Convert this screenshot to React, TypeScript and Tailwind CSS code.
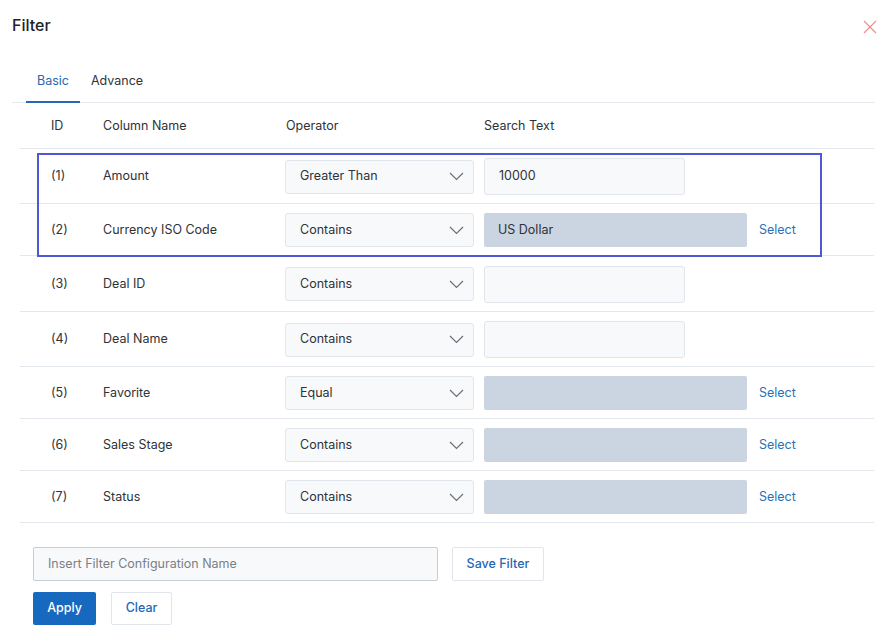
import React from "react";

type Row = {
  id: number;
  name: string;
  op: string;
  kind: "text" | "lookup";
  value?: string;
  h: string;
};

const rows: Row[] = [
  { id: 1, name: "Amount", op: "Greater Than", kind: "text", value: "10000", h: "h-[55px]" },
  { id: 2, name: "Currency ISO Code", op: "Contains", kind: "lookup", value: "US Dollar", h: "h-[52px]" },
  { id: 3, name: "Deal ID", op: "Contains", kind: "text", h: "h-[56px]" },
  { id: 4, name: "Deal Name", op: "Contains", kind: "text", h: "h-[55px]" },
  { id: 5, name: "Favorite", op: "Equal", kind: "lookup", h: "h-[52px]" },
  { id: 6, name: "Sales Stage", op: "Contains", kind: "lookup", h: "h-[52px]" },
  { id: 7, name: "Status", op: "Contains", kind: "lookup", h: "h-[52px]" },
];

function Chevron() {
  return (
    <svg width="15" height="9" viewBox="0 0 15 9" fill="none">
      <polyline points="1,1 7.5,7.5 14,1" stroke="#6b6f76" strokeWidth="1.2" />
    </svg>
  );
}

function CloseIcon() {
  return (
    <svg width="14" height="14" viewBox="0 0 14 14" fill="none">
      <line x1="1" y1="1" x2="13" y2="13" stroke="#ef8c8c" strokeWidth="1.1" />
      <line x1="13" y1="1" x2="1" y2="13" stroke="#ef8c8c" strokeWidth="1.1" />
    </svg>
  );
}

function FilterRow({ row }: { row: Row }) {
  const tall = row.kind === "text";
  return (
    <div
      className={`grid grid-cols-[52px_182px_199px_1fr] items-center border-b border-[#e3e7ee] pl-[31px] pt-[1px] ${row.h}`}
    >
      <div>({row.id})</div>
      <div>{row.name}</div>
      <div className="flex h-[34px] w-[189px] items-center justify-between rounded-[3px] border border-[#e1e5ec] bg-[#f8f9fb] pl-[14px] pr-[9px]">
        <span>{row.op}</span>
        <Chevron />
      </div>
      <div className="flex items-center gap-[12px]">
        {tall ? (
          <div className="flex h-[37px] w-[201px] items-center rounded-[3px] border border-[#e1e5ec] bg-[#f8f9fb] px-[14px]">
            {row.value ?? ""}
          </div>
        ) : (
          <>
            <div className="flex h-[34px] w-[263px] items-center rounded-[2px] bg-[#cbd5e1] px-[14px]">
              {row.value ?? ""}
            </div>
            <span className="text-[#2d70b7]">Select</span>
          </>
        )}
      </div>
    </div>
  );
}

export default function App() {
  return (
    <div
      className="relative h-[630px] w-[887px] overflow-hidden bg-white text-[12.5px] text-[#2f3237]"
      style={{ fontFamily: "Inter, 'Noto Sans', sans-serif" }}
    >
      <div className="flex h-[49px] items-center pl-[12px] text-[16px] font-medium text-[#1f2226]">
        Filter
      </div>
      <button className="absolute left-[863px] top-[20px]">
        <CloseIcon />
      </button>

      {/* Tabs */}
      <div className="mx-[12px] mt-[12px] flex border-b border-[#e6e9ef] pl-[14px]">
        <div className="-mb-px flex h-[42px] items-center border-b-2 border-[#2468b4] px-[11px] pt-[1px] text-[#2468b4]">
          Basic
        </div>
        <div className="-mb-px flex h-[42px] items-center border-b-2 border-transparent px-[11px] pt-[1px]">
          Advance
        </div>
      </div>

      {/* Criteria table */}
      <div className="relative ml-[20px] mr-[13px]">
        <div className="grid h-[46px] grid-cols-[52px_182px_199px_1fr] items-center border-b border-[#e3e7ee] pl-[31px] pt-[2px]">
          <div>ID</div>
          <div>Column Name</div>
          <div className="pl-[1px]">Operator</div>
          <div>Search Text</div>
        </div>
        {rows.map((r) => (
          <FilterRow key={r.id} row={r} />
        ))}
        <div className="pointer-events-none absolute left-[17px] top-[50px] h-[104px] w-[785px] border-2 border-[#4f57d9]" />
      </div>

      {/* Saved configuration + actions */}
      <div className="ml-[33px] mt-[24px] flex gap-[14px]">
        <div className="flex h-[34px] w-[405px] items-center rounded-[2px] border border-[#c7cdd8] bg-[#f8f9fb] px-[14px] text-[#7a7f87]">
          Insert Filter Configuration Name
        </div>
        <button className="h-[34px] w-[92px] rounded-[2px] border border-[#e1e5ec] bg-white font-medium text-[#2468b4]">
          Save Filter
        </button>
      </div>
      <div className="ml-[33px] mt-[11px] flex gap-[15px]">
        <button className="h-[33px] w-[63px] rounded-[2px] bg-[#1769c0] font-medium text-white">
          Apply
        </button>
        <button className="h-[33px] w-[61px] rounded-[2px] border border-[#e1e5ec] bg-white font-medium text-[#2468b4]">
          Clear
        </button>
      </div>
    </div>
  );
}
